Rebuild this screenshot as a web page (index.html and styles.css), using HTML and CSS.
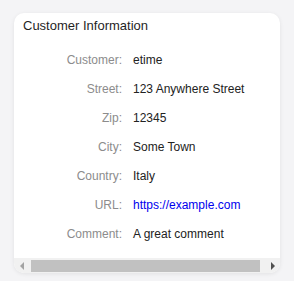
FILE: index.html
```html
<!DOCTYPE html>
<html lang="en">
<head>
    <meta charset="UTF-8">
    <meta name="viewport" content="width=device-width, initial-scale=1.0">
    <title>Customer Information</title>
    <link rel="stylesheet" href="styles.css">
</head>
<body>
    <div class="card">
        <div class="card-title">Customer Information</div>
        <div class="card-body">
            <div class="fields">
                <div class="label">Customer:</div>
                <div class="value">etime</div>
                <div class="label">Street:</div>
                <div class="value">123 Anywhere Street</div>
                <div class="label">Zip:</div>
                <div class="value">12345</div>
                <div class="label">City:</div>
                <div class="value">Some Town</div>
                <div class="label">Country:</div>
                <div class="value">Italy</div>
                <div class="label">URL:</div>
                <div class="value"><a href="#">https://example.com</a></div>
                <div class="label">Comment:</div>
                <div class="value">A great comment</div>
            </div>
        </div>
        <div class="scrollbar">
            <div class="arrow arrow-left"></div>
            <div class="track">
                <div class="thumb"></div>
            </div>
            <div class="arrow arrow-right"></div>
        </div>
    </div>
</body>
</html>
```

FILE: styles.css
```css
body {
    font-family: 'Liberation Sans', Arial, sans-serif;
    background-color: #f4f4f6;
    margin: 0;
    padding: 13px 14px;
    color: #222;
}

.card {
    background-color: #fff;
    border-radius: 10px;
    box-shadow: 0 1px 4px rgba(0, 0, 0, 0.08);
    overflow: hidden;
}

.card-title {
    font-size: 13px;
    line-height: 22px;
    padding: 2px 9px 0;
    color: #1f1f1f;
}

.card-body {
    overflow: hidden;
    padding-top: 9px;
}

.fields {
    display: grid;
    grid-template-columns: 108px 1fr;
    column-gap: 11px;
    font-size: 12px;
    padding-bottom: 9px;
}

.label,
.value {
    line-height: 29px;
    white-space: nowrap;
}

.label {
    text-align: right;
    color: #8c8c8c;
}

.value a {
    color: #0000ee;
    text-decoration: none;
}

.scrollbar {
    display: flex;
    height: 15px;
    background-color: #f1f1f1;
}

.arrow {
    width: 15px;
    display: flex;
    align-items: center;
    justify-content: center;
}

.arrow::before {
    content: '';
    width: 0;
    height: 0;
    border-top: 4px solid transparent;
    border-bottom: 4px solid transparent;
}

.arrow-left::before {
    border-right: 4px solid #a3a3a3;
}

.arrow-right::before {
    border-left: 4px solid #505050;
}

.track {
    flex: 1;
    display: flex;
    align-items: center;
}

.thumb {
    margin-left: 2px;
    width: 229px;
    height: 12px;
    background-color: #c1c1c1;
}
```
